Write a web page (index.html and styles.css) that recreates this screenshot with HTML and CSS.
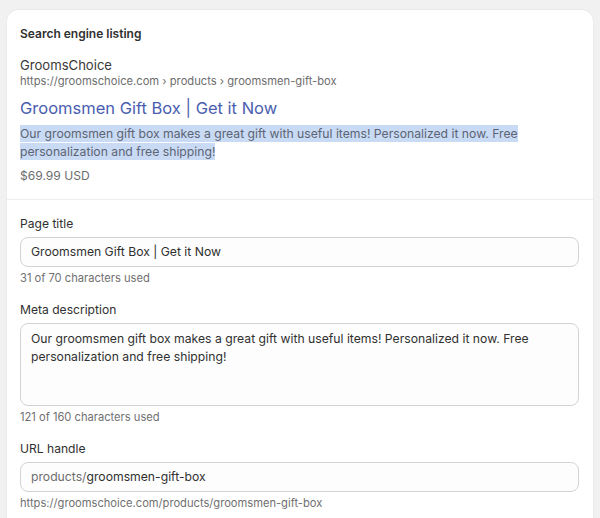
FILE: index.html
```html
<!DOCTYPE html>
<html lang="en">
<head>
<meta charset="utf-8">
<title>Search engine listing</title>
<link rel="stylesheet" href="styles.css">
</head>
<body>
<div class="card">
  <section class="preview">
    <h2 class="heading">Search engine listing</h2>
    <div class="site-name">GroomsChoice</div>
    <div class="site-url">https://groomschoice.com › products › groomsmen-gift-box</div>
    <div class="result-title">Groomsmen Gift Box | Get it Now</div>
    <p class="result-desc"><span class="selected">Our groomsmen gift box makes a great gift with useful items! Personalized it now. Free personalization and free shipping!</span></p>
    <div class="price">$69.99 USD</div>
  </section>
  <section class="form">
    <div class="field">
      <div class="label">Page title</div>
      <div class="input">Groomsmen Gift Box | Get it Now</div>
      <div class="help">31 of 70 characters used</div>
    </div>
    <div class="field">
      <div class="label">Meta description</div>
      <div class="input textarea">Our groomsmen gift box makes a great gift with useful items! Personalized it now. Free personalization and free shipping!</div>
      <div class="help">121 of 160 characters used</div>
    </div>
    <div class="field">
      <div class="label">URL handle</div>
      <div class="input"><span class="prefix">products/</span>groomsmen-gift-box</div>
      <div class="help">https://groomschoice.com/products/groomsmen-gift-box</div>
    </div>
  </section>
</div>
</body>
</html>
```
FILE: styles.css
```css
html, body {
  margin: 0;
  padding: 0;
}
body {
  background: #f1f1f1;
  font-family: Inter, "Noto Sans", "Liberation Sans", sans-serif;
  color: #303030;
  padding: 10px 7px 0 7px;
  height: 518px;
  box-sizing: border-box;
  overflow: hidden;
}
.card {
  background: #ffffff;
  border-radius: 12px 12px 0 0;
  box-shadow: 0 0 0 1px #ebebeb;
  min-height: 520px;
}
.preview {
  padding: 15px 14px 14px 13px;
  border-bottom: 1px solid #eeeeee;
}
.heading {
  margin: 0;
  font-size: 12px;
  line-height: 18px;
  font-weight: 600;
  color: #303030;
}
.site-name {
  margin-top: 14px;
  font-size: 13.1px;
  line-height: 16px;
  color: #3a3a3a;
}
.site-url {
  font-size: 11.2px;
  line-height: 16px;
  color: #6d6d6d;
}
.result-title {
  margin-top: 7px;
  font-size: 16.5px;
  line-height: 24px;
  color: #4a5eaf;
}
.result-desc {
  margin: 5px 0 0 0;
  font-size: 12.2px;
  line-height: 18px;
  color: #5c6473;
  padding-right: 20px;
}
.selected {
  background: #c9daf4;
  padding: 1px 0;
}
.price {
  margin-top: 6px;
  font-size: 12.1px;
  line-height: 18px;
  color: #6d6d6d;
}
.form {
  padding: 15px 14px 0 13px;
  display: flex;
  flex-direction: column;
  gap: 15px;
}
.field {
  display: flex;
  flex-direction: column;
}
.label {
  font-size: 12.1px;
  line-height: 18px;
  color: #303030;
}
.input {
  margin-top: 4px;
  height: 30px;
  box-sizing: border-box;
  border: 1px solid #d3d3d3;
  border-radius: 8px;
  background: #fdfdfd;
  padding: 0 10px;
  font-size: 12.2px;
  line-height: 28px;
  color: #303030;
}
.textarea {
  height: 83px;
  padding: 6px 30px 6px 10px;
  line-height: 18px;
}
.prefix {
  color: #6d6d6d;
}
.help {
  margin-top: 3px;
  font-size: 11.15px;
  line-height: 16px;
  color: #707070;
}
```
